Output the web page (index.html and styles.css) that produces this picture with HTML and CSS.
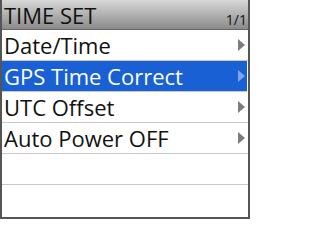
FILE: index.html
```html
<!DOCTYPE html>
<html>
<head>
<meta charset="utf-8">
<link rel="stylesheet" href="styles.css">
</head>
<body>
<div class="screen">
  <div class="header">
    <span class="title">TIME SET</span>
    <span class="page">1/1</span>
  </div>
  <div class="list">
    <div class="row"><span class="label">Date/Time</span><span class="arrow"></span></div>
    <div class="row sel"><span class="label">GPS Time Correct</span><span class="arrow"></span></div>
    <div class="row"><span class="label">UTC Offset</span><span class="arrow"></span></div>
    <div class="row"><span class="label">Auto Power OFF</span><span class="arrow"></span></div>
    <div class="row"></div>
    <div class="row last"></div>
  </div>
</div>
</body>
</html>
```

FILE: styles.css
```css
html, body { margin: 0; padding: 0; background: #fff; }
.screen {
  width: 250px;
  height: 219px;
  box-sizing: border-box;
  border-left: 2px solid #555;
  border-right: 2px solid #555;
  border-bottom: 2px solid #555;
  font-family: "Open Sans", "DejaVu Sans", sans-serif;
  color: #111;
  overflow: hidden;
  display: flex;
  flex-direction: column;
}
.header {
  height: 29px;
  flex: none;
  background: linear-gradient(#d8d8d8, #8a8a8a);
  border-bottom: 1px solid #666;
  display: flex;
  align-items: flex-end;
  justify-content: space-between;
  padding: 0 1px 0 2px;
}
.title { font-size: 22px; line-height: 28px; }
.page { font-size: 14px; line-height: 16px; margin-bottom: 1px; }
.list { flex: 1; display: flex; flex-direction: column; }
.row {
  height: 30px;
  flex: none;
  border-bottom: 1px solid #c8c8c8;
  display: flex;
  align-items: center;
  justify-content: space-between;
  padding: 0 3px 0 2px;
}
.row.last { border-bottom: none; flex: 1; }
.label { font-size: 22px; line-height: 29px; }
.arrow {
  width: 0; height: 0;
  border-top: 6px solid transparent;
  border-bottom: 6px solid transparent;
  border-left: 7px solid #7c7c7c;
}
.row.sel {
  background: #1860d4;
  color: #fff;
  margin-right: 1px;
  padding-right: 2px;
}
.row.sel .arrow { border-left-color: #7fa6e6; }
```
